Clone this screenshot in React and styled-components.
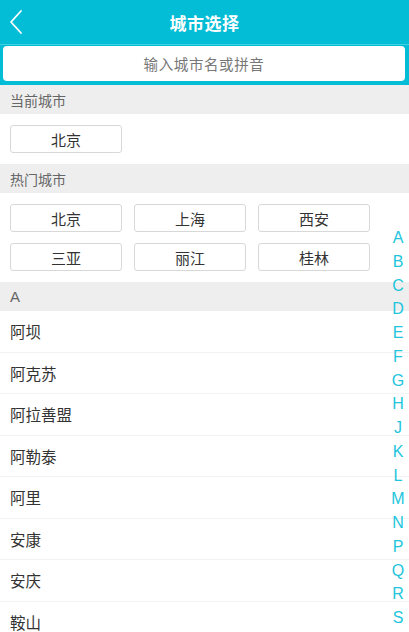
import React from "react";
import styled, { createGlobalStyle } from "styled-components";

const Global = createGlobalStyle`
  html, body { margin: 0; padding: 0; height: 100%; overflow: hidden; background: #fff; }
  body { font-family: "Liberation Sans", "Noto Sans CJK SC", sans-serif; }
  * { box-sizing: border-box; }
`;

const Page = styled.div`
  position: relative;
  width: 100%;
  height: 632px;
  overflow: hidden;
  background: #fff;
`;

const Header = styled.div`
  position: relative;
  height: 44px;
  background: #03bcd5;
  display: flex;
  align-items: center;
  justify-content: center;
`;

const Back = styled.div`
  position: absolute;
  left: 8px;
  top: 9px;
  width: 18px;
  height: 26px;
  display: flex;
`;

const Title = styled.h1`
  margin: 0;
  color: #fff;
  font-size: 17px;
  font-weight: 700;
  font-family: "Noto Sans CJK SC", sans-serif;
  letter-spacing: 0.5px;
`;

const SearchWrap = styled.div`
  background: #03bcd5;
  padding: 1px 4px 4px 3px;
  border-top: 1px solid #3fd0e2;
`;

const SearchBox = styled.div`
  height: 35px;
  background: #fff;
  border-radius: 4px;
  display: flex;
  align-items: center;
  justify-content: center;
  color: #777;
  font-size: 14.5px;
  font-family: "Noto Sans CJK SC", sans-serif;
  letter-spacing: 0.6px;
`;

const SectionHead = styled.div`
  height: 29px;
  background: #eeeeee;
  color: #666;
  font-size: 14px;
  font-family: "Noto Sans CJK SC", sans-serif;
  display: flex;
  align-items: center;
  padding-left: 10px;
`;

const LetterHead = styled(SectionHead)`
  font-family: "Liberation Sans", sans-serif;
  font-size: 15px;
  color: #666;
`;

const Grid = styled.div`
  display: grid;
  grid-template-columns: repeat(3, 112px);
  column-gap: 12px;
  row-gap: 11px;
  padding: 11px 10px;
`;

const CityBtn = styled.div`
  height: 28px;
  border: 1px solid #d8d8d8;
  border-radius: 3px;
  display: flex;
  align-items: center;
  justify-content: center;
  color: #333;
  font-size: 15px;
  font-family: "Noto Sans CJK SC", sans-serif;
`;

const Item = styled.div`
  height: 41.5px;
  border-bottom: 1px solid #f2f2f2;
  display: flex;
  align-items: center;
  padding-left: 10px;
  color: #333;
  font-size: 15.5px;
  font-family: "Noto Sans CJK SC", sans-serif;
`;

const Index = styled.div`
  position: absolute;
  right: 0;
  top: 226px;
  width: 22px;
  display: flex;
  flex-direction: column;
  align-items: center;
`;

const IndexLetter = styled.div`
  height: 23.75px;
  line-height: 23.75px;
  color: #22c5dc;
  font-size: 16px;
  font-family: "Liberation Sans", sans-serif;
`;

const hot = ["北京", "上海", "西安", "三亚", "丽江", "桂林"];
const cities = ["阿坝", "阿克苏", "阿拉善盟", "阿勒泰", "阿里", "安康", "安庆", "鞍山"];
const letters = "ABCDEFGHJKLMNPQRS".split("");

export default function App() {
  return (
    <Page>
      <Global />
      <Header>
        <Back>
          <svg width="18" height="26" viewBox="0 0 18 26">
            <path d="M13 2 L3 13 L13 24" fill="none" stroke="#fff" strokeWidth="1.8" strokeLinecap="round" strokeLinejoin="round" />
          </svg>
        </Back>
        <Title>城市选择</Title>
      </Header>
      <SearchWrap>
        <SearchBox>输入城市名或拼音</SearchBox>
      </SearchWrap>
      <SectionHead>当前城市</SectionHead>
      <Grid>
        <CityBtn>北京</CityBtn>
      </Grid>
      <SectionHead>热门城市</SectionHead>
      <Grid>
        {hot.map((c) => (
          <CityBtn key={c}>{c}</CityBtn>
        ))}
      </Grid>
      <LetterHead>A</LetterHead>
      {cities.map((c) => (
        <Item key={c}>{c}</Item>
      ))}
      <Index>
        {letters.map((l) => (
          <IndexLetter key={l}>{l}</IndexLetter>
        ))}
      </Index>
    </Page>
  );
}
